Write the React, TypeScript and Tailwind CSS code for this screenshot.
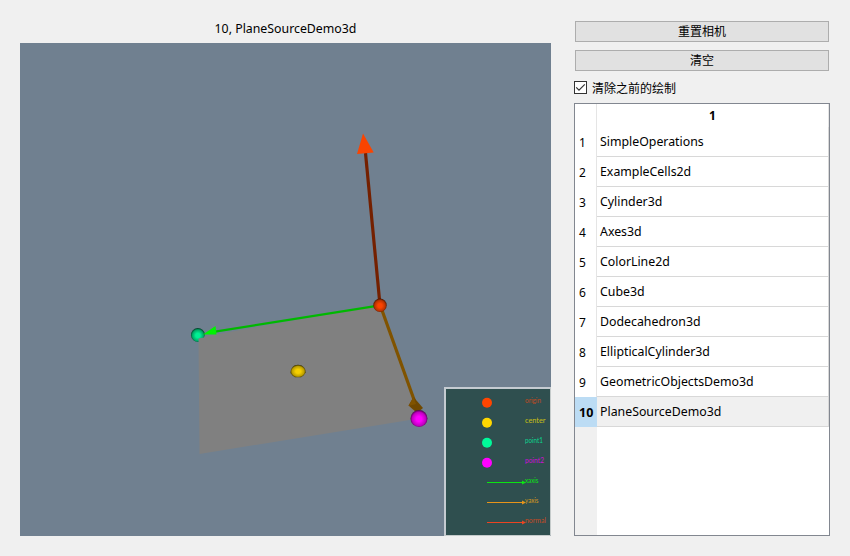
const demos = [
  'SimpleOperations',
  'ExampleCells2d',
  'Cylinder3d',
  'Axes3d',
  'ColorLine2d',
  'Cube3d',
  'Dodecahedron3d',
  'EllipticalCylinder3d',
  'GeometricObjectsDemo3d',
  'PlaneSourceDemo3d',
];

const points = [
  { name: 'origin', color: '#ff4500', text: '#c04a20', y: 403, w: 16 },
  { name: 'center', color: '#ffd700', text: '#c8bf14', y: 423, w: 20.5 },
  { name: 'point1', color: '#00fa9a', text: '#0cd48e', y: 443, w: 18 },
  { name: 'point2', color: '#ff00ff', text: '#cf0cd6', y: 463, w: 19 },
];

const axes = [
  { name: 'xaxis', color: '#0be512', text: '#0be512', y: 483, w: 13.5 },
  { name: 'yaxis', color: '#e8941a', text: '#da9a1c', y: 503, w: 13.5 },
  { name: 'normal', color: '#ec4420', text: '#c44a24', y: 523, w: 21 },
];

function Sphere({ id, color, mid, dark }: { id: string; color: string; mid: string; dark: string }) {
  return (
    <radialGradient id={id} cx="0.5" cy="0.53" r="0.53">
      <stop offset="0" stopColor={color} />
      <stop offset="0.3" stopColor={color} />
      <stop offset="0.75" stopColor={mid} />
      <stop offset="1" stopColor={dark} />
    </radialGradient>
  );
}

function Scene() {
  return (
    <svg className="block h-[493px] w-[531px] font-['Lato',sans-serif]" viewBox="20 43 531 493">
      <defs>
        <Sphere id="red" color="#fa4300" mid="#b83200" dark="#401400" />
        <Sphere id="yellow" color="#f5cf00" mid="#bd9f00" dark="#332b00" />
        <Sphere id="green" color="#00ef93" mid="#00a866" dark="#003320" />
        <Sphere id="magenta" color="#fc00fc" mid="#c000c0" dark="#480048" />
      </defs>
      <rect x="20" y="43" width="531" height="493" fill="#708090" />
      <path d="M198.5 337.5L380 305L419 418.5L199.5 454Z" fill="#808080" />
      <path d="M204.9 334.5A7 7 0 1 0 198.5 342V338.5L204 337.5Z" fill="url(#green)" />
      <path d="M380 305L365.5 153" stroke="#742000" strokeWidth="3.2" />
      <path d="M363 133.5L373.7 152.5L357 154Z" fill="#fa4400" />
      <path d="M380 305.3L215 331.6" stroke="#00b800" strokeWidth="2.2" />
      <path d="M203 334.5L215.5 326L216.5 334.5Z" fill="#00f400" />
      <path d="M380.5 306L414.5 401" stroke="#805300" strokeWidth="3.2" />
      <path d="M413.5 397L423 408L417 413L408.5 405.5Z" fill="#704800" />
      <path d="M413.5 397L416 404L408.5 406Z" fill="#805300" />
      <circle cx="380" cy="305.3" r="6.7" fill="url(#red)" />
      <circle cx="419" cy="418.5" r="8.5" fill="url(#magenta)" />
      <path d="M290.5 373C290.5 368 293.5 364.8 298 364.8S305.7 368 305.7 372.5L303.5 375.5L301 377.2H295L292.5 375.5Z" fill="url(#yellow)" />
      <rect x="445" y="388" width="105" height="147" fill="#2f4f4f" />
      <path d="M445 536V388H551" fill="none" stroke="#c5cbd1" strokeWidth="2" />
      <path d="M550.5 388V535.5H445" fill="none" stroke="#c5cbcb" />
      {points.map((p) => (
        <g key={p.name}>
          <circle cx="487" cy={p.y - 0.3} r="5" fill={p.color} />
          <text x="525" y={p.y} fontSize="7" textLength={p.w} lengthAdjust="spacingAndGlyphs" fill={p.text}>{p.name}</text>
        </g>
      ))}
      {axes.map((a) => (
        <g key={a.name}>
          <path d={`M487 ${a.y - 0.5}H523`} stroke={a.color} />
          <path d={`M522 ${a.y - 2.5}L526 ${a.y - 0.5}L522 ${a.y + 1.5}Z`} fill={a.color} />
          <text x="525" y={a.y} fontSize="7" textLength={a.w} lengthAdjust="spacingAndGlyphs" fill={a.text}>{a.name}</text>
        </g>
      ))}
    </svg>
  );
}

export default function App() {
  return (
    <div className="flex h-[556px] w-[850px] gap-[23px] bg-[#f0f0f0] px-5 pt-[14px] pb-5 font-['Noto_Sans','Noto_Sans_CJK_SC',sans-serif] text-[12px] text-black">
      <main className="flex w-[531px] flex-col">
        <h1 className="h-[29px] text-center text-[12.33px] leading-[29px]">10, PlaneSourceDemo3d</h1>
        <Scene />
      </main>
      <aside className="flex w-64 flex-col pt-[7px]">
        <button className="mx-px flex h-[21px] shrink-0 items-center justify-center border border-[#adadad] bg-[#e1e1e1]">重置相机</button>
        <button className="mx-px mt-2 flex h-[21px] shrink-0 items-center justify-center border border-[#adadad] bg-[#e1e1e1]">清空</button>
        <label className="mt-2 flex h-[17px] shrink-0 items-center gap-[5px]">
          <span className="flex size-[13px] items-center justify-center border border-[#333] bg-white">
            <svg className="size-[11px]" viewBox="0 0 11 11" fill="none" stroke="#333" strokeWidth="1.2">
              <path d="M1.2 5.3L4 8.1L9.8 2.3" />
            </svg>
          </span>
          <span className="pt-0.5">清除之前的绘制</span>
        </label>
        <div className="mt-[7px] flex h-[433px] flex-col border border-[#828790] bg-white">
          <div className="flex h-[23px] shrink-0">
            <div className="w-[22px] border-r border-[#e5e5e5]" />
            <div className="flex-1 border-r border-[#e5e5e5] text-center font-bold leading-[23px]">1</div>
          </div>
          {demos.map((name, i) => {
            const selected = i === demos.length - 1;
            return (
              <div key={name} className="flex h-[30px] shrink-0 leading-[32px]">
                <div className={selected ? 'w-[22px] bg-[#bcdcf4] pl-1 text-[12.5px] font-bold' : 'w-[22px] border-r border-[#e5e5e5] pl-1'}>{i + 1}</div>
                <div className={selected ? 'flex-1 border-r border-b border-[#d8d8d8] bg-[#f0f0f0] pl-[3px] text-[12.33px] leading-[29px]' : 'flex-1 border-r border-b border-[#d8d8d8] pl-[3px] text-[12.33px] leading-[29px]'}>{name}</div>
              </div>
            );
          })}
          <div className="w-[22px] flex-1 bg-[#f0f0f0]" />
        </div>
      </aside>
    </div>
  );
}
